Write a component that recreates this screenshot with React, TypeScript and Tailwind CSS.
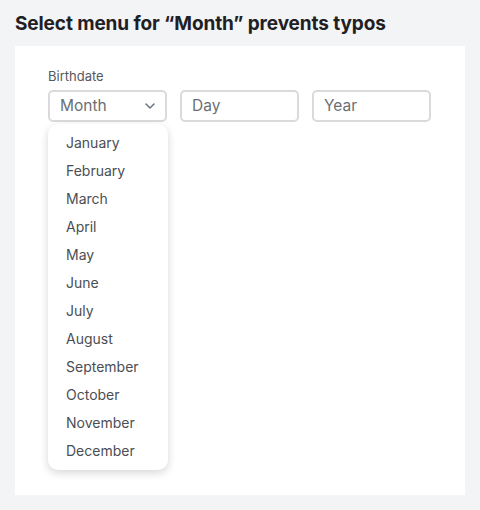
import React from 'react';

const months = [
    'January', 'February', 'March', 'April', 'May', 'June',
    'July', 'August', 'September', 'October', 'November', 'December',
];

const Chevron = () => (
    <svg width="10" height="6" viewBox="0 0 10 6" fill="none" className="text-gray-500">
        <path d="M1 1l4 4 4-4" stroke="currentColor" strokeWidth="1.5" strokeLinecap="round" strokeLinejoin="round" />
    </svg>
);

const App: React.FC = () => {
    return (
        <div className="min-h-[510px] w-[480px] bg-[#f3f4f6] px-[15px] pt-[12px] font-['Inter',sans-serif]">
            <h2 className="text-[19px] font-bold leading-[24px] text-[#1f2023] tracking-[-0.1px]">
                Select menu for “Month” prevents typos
            </h2>
            <div className="mt-[10px] h-[449px] w-[450px] bg-white pl-[33px] pt-[22px]">
                <label className="block text-[13px] leading-[16px] text-[#55585e]">Birthdate</label>
                <div className="mt-[6px] flex gap-[13px]">
                    <div className="relative">
                        <div className="flex h-[32px] w-[119px] items-center justify-between rounded-[5px] border-2 border-[#d9dadc] pl-[10px] pr-[10px] text-[15.5px] text-[#6b6e73]">
                            <span>Month</span>
                            <Chevron />
                        </div>
                        <ul className="absolute left-0 top-[34px] w-[120px] rounded-[10px] bg-white py-[5px] shadow-[0_3px_8px_rgba(0,0,0,0.16)]">
                            {months.map(m => (
                                <li key={m} className="pl-[18px] text-[14px] leading-[28px] text-[#4b4e54]">
                                    {m}
                                </li>
                            ))}
                        </ul>
                    </div>
                    <div className="flex h-[32px] w-[119px] items-center rounded-[5px] border-2 border-[#d9dadc] pl-[10px] text-[15.5px] text-[#6b6e73]">
                        Day
                    </div>
                    <div className="flex h-[32px] w-[119px] items-center rounded-[5px] border-2 border-[#d9dadc] pl-[10px] text-[15.5px] text-[#6b6e73]">
                        Year
                    </div>
                </div>
            </div>
        </div>
    );
};

export default App;
